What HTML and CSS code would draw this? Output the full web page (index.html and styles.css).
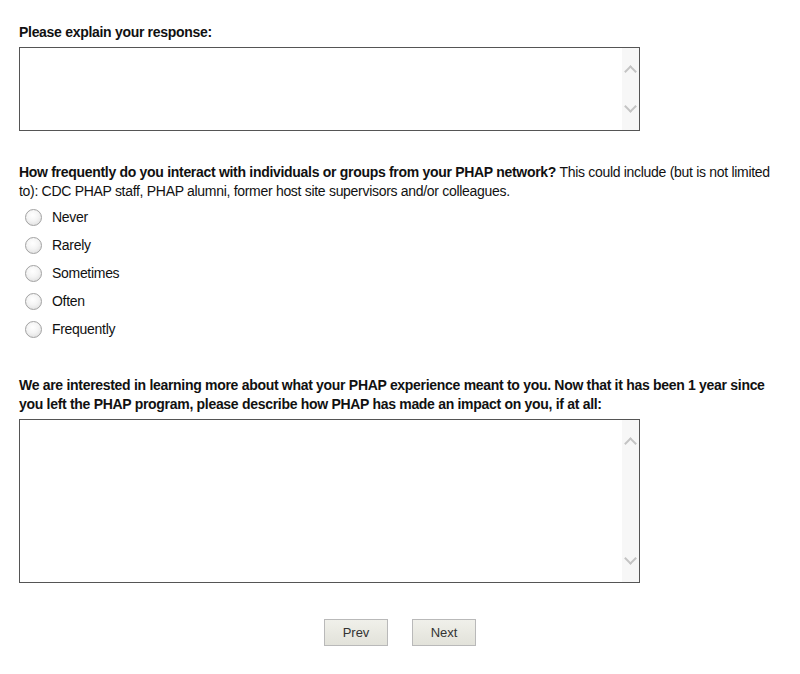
FILE: index.html
```html
<!DOCTYPE html>
<html>
<head>
    <title>PHAP Survey</title>
    <link rel="stylesheet" href="styles.css">
</head>
<body>
    <div class="survey">
        <div class="question">
            <div class="label"><b>Please explain your response:</b></div>
            <div class="textbox short">
                <textarea></textarea>
                <div class="scroll"><span class="chev up"></span><span class="chev down"></span></div>
            </div>
        </div>

        <div class="question">
            <div class="label"><b>How frequently do you interact with individuals or groups from your PHAP network?</b> This could include (but is not limited to): CDC PHAP staff, PHAP alumni, former host site supervisors and/or colleagues.</div>
            <div class="choices">
                <label class="choice"><input type="radio" name="freq"> Never</label>
                <label class="choice"><input type="radio" name="freq"> Rarely</label>
                <label class="choice"><input type="radio" name="freq"> Sometimes</label>
                <label class="choice"><input type="radio" name="freq"> Often</label>
                <label class="choice"><input type="radio" name="freq"> Frequently</label>
            </div>
        </div>

        <div class="question">
            <div class="label"><b>We are interested in learning more about what your PHAP experience meant to you. Now that it has been 1 year since you left the PHAP program, please describe how PHAP has made an impact on you, if at all:</b></div>
            <div class="textbox tall">
                <textarea></textarea>
                <div class="scroll"><span class="chev up"></span><span class="chev down"></span></div>
            </div>
        </div>

        <div class="nav">
            <button class="btn">Prev</button>
            <button class="btn">Next</button>
        </div>
    </div>
</body>
</html>
```

FILE: styles.css
```css
body {
    margin: 0;
    font-family: "Liberation Sans", Arial, sans-serif;
    font-size: 14px;
    line-height: 19px;
    letter-spacing: -0.3px;
    color: #111;
    background: #fff;
}
.survey {
    padding: 23px 19px 0 19px;
}
.question {
    margin-bottom: 32px;
}
.label b {
    font-weight: bold;
}
.textbox {
    display: flex;
    width: 619px;
    border: 1px solid #555;
    margin-top: 5px;
}
.textbox.short {
    height: 82px;
}
.textbox.tall {
    height: 162px;
}
.textbox textarea {
    flex: 1;
    border: none;
    outline: none;
    resize: none;
    margin: 0;
    padding: 2px;
    font-family: inherit;
    font-size: 14px;
}
.scroll {
    width: 17px;
    background: #f7f7f7;
    display: flex;
    flex-direction: column;
    justify-content: space-between;
    align-items: center;
    padding: 16px 0 16px 0;
}
.chev {
    width: 7px;
    height: 7px;
    border-left: 2px solid #c4c4c4;
    border-top: 2px solid #c4c4c4;
}
.chev.up {
    transform: rotate(45deg);
    margin-top: 3px;
}
.chev.down {
    transform: rotate(225deg);
    margin-bottom: 3px;
}
.choices {
    margin-top: 2px;
}
.choice {
    display: flex;
    align-items: center;
    height: 28px;
    padding-left: 6px;
}
.choice input {
    appearance: none;
    -webkit-appearance: none;
    width: 17px;
    height: 17px;
    margin: 0 10px 0 0;
    border: 1px solid #a2a2a2;
    border-radius: 50%;
    background: radial-gradient(circle at 45% 35%, #ffffff 0%, #f4f4f4 45%, #d8d8d8 100%);
    box-sizing: border-box;
}
.question:nth-child(2) {
    margin-bottom: 33px;
}
.nav {
    display: flex;
    justify-content: center;
    gap: 24px;
    margin-top: 36px;
    margin-left: -19px;
    margin-right: -19px;
}
.btn {
    width: 64px;
    height: 27px;
    border: 1px solid #b9b9b9;
    background: linear-gradient(#f0f0ea, #e2e2da);
    color: #333;
    font-family: "Liberation Sans", Arial, sans-serif;
    font-size: 13px;
    padding: 0;
}
```
